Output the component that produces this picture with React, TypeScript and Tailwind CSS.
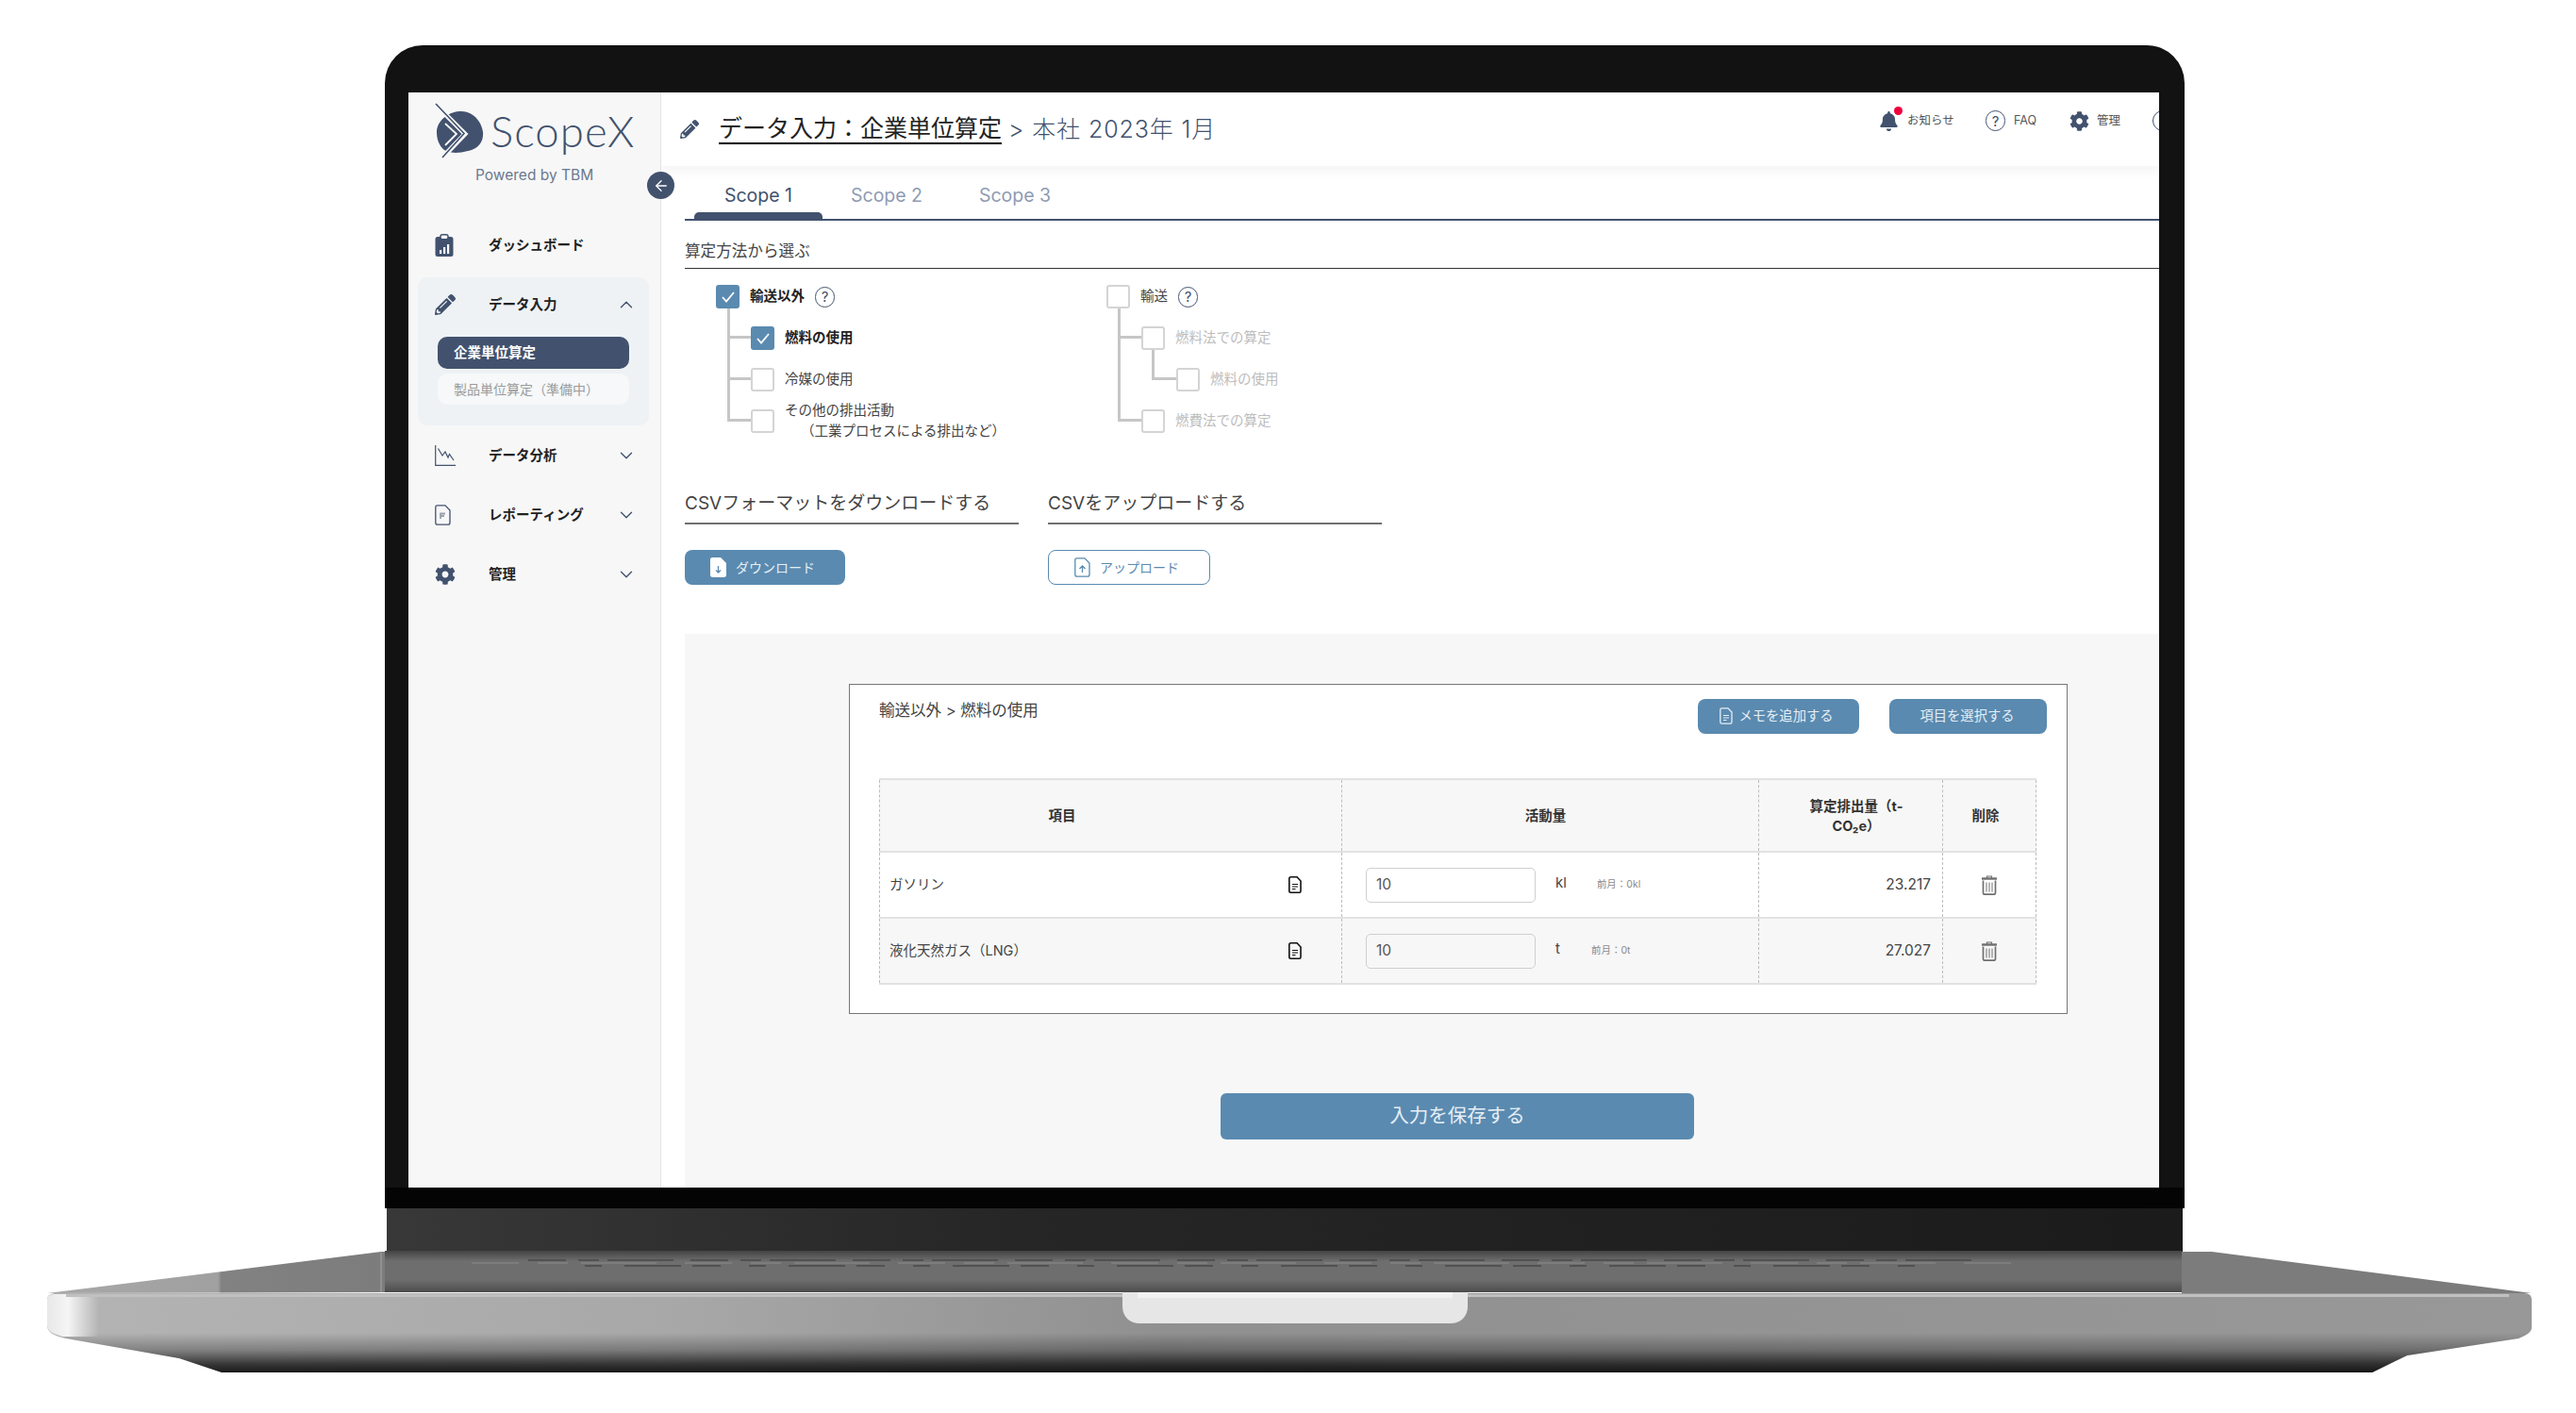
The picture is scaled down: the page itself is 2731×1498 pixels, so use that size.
import React from "react";
import { ArrowLeft, ChevronDown, ChevronUp } from "lucide-react";
import { FaBell, FaCog, FaPencilAlt } from "react-icons/fa";

const navy = "#42526e";

function Logo() {
  return (
    <svg width="56" height="60" viewBox="0 0 56 60" className="shrink-0">
      <path d="M3 31C3 20 14 10 27 9C39 8 50 17 52 31C53 41 47 49 36 51C25 54 13 54 8 47C5 43 3 38 3 31Z" fill={navy} />
      <path d="M1 1L33 33L10 57" fill="none" stroke="#f7f7f7" strokeWidth="5" />
      <path d="M2 1L32 32.500L9 58" fill="none" stroke={navy} strokeWidth="1.600" />
      <path d="M12 22L24 33L12 45" fill="none" stroke="#f7f7f7" strokeWidth="1.800" />
    </svg>
  );
}

function DashIcon() {
  return (
    <svg width="20" height="24" viewBox="0 0 20 24">
      <rect x="0.500" y="3" width="19" height="21" rx="2.500" fill={navy} />
      <rect x="6" y="0.800" width="8" height="5" rx="2" fill="#f7f7f7" stroke={navy} strokeWidth="1.500" />
      <rect x="5" y="17" width="2.200" height="4" fill="#fff" />
      <rect x="9" y="14" width="2.200" height="7" fill="#fff" />
      <rect x="13" y="11" width="2.200" height="10" fill="#fff" />
    </svg>
  );
}

function ChartIcon() {
  return (
    <svg width="22" height="22" viewBox="0 0 22 22" fill="none" stroke={navy} strokeWidth="1.200">
      <path d="M0.700 0V21.300H22" />
      <path d="M3.500 3.500L8 11L11 7L14 13L15.500 9.500L20 16" />
    </svg>
  );
}

function FileNavIcon() {
  return (
    <svg width="17" height="22" viewBox="0 0 17 22" fill="none">
      <path d="M2.500 0.800H11L16 6V19C16 20.300 15 21.200 14 21.200H3C1.800 21.200 0.800 20.300 0.800 19V2.500C0.800 1.500 1.500 0.800 2.500 0.800Z" stroke={navy} strokeWidth="1.300" />
      <path d="M6 15V9.500H11M6 12H10" stroke="#9aa0ab" strokeWidth="1.800" />
    </svg>
  );
}

function Doc({ color = "#111", bg = "none", width = 1.6 }: { color?: string; bg?: string; width?: number }) {
  return (
    <svg width="14" height="18" viewBox="0 0 14 18" fill={bg} stroke={color} strokeWidth={width}>
      <path d="M2.500 0.800H9L13 5V15.500C13 16.500 12.200 17.200 11.500 17.200H2.500C1.500 17.200 0.800 16.500 0.800 15.500V2.500C0.800 1.500 1.500 0.800 2.500 0.800Z" />
      <path d="M4 8.500H10M4 11H10M4 13.500H7.500" strokeWidth="1.100" />
    </svg>
  );
}

function Trash() {
  return (
    <svg width="18" height="21" viewBox="0 0 18 21" fill="none" stroke="#6f6f6f">
      <path d="M1 3.500H17" strokeWidth="2.400" />
      <path d="M6.500 3V1H11.500V3" strokeWidth="1.200" />
      <path d="M2.500 5.500V18.500C2.500 19.500 3.200 20.200 4 20.200H14C14.800 20.200 15.500 19.500 15.500 18.500V5.500" strokeWidth="1.700" />
      <path d="M6 7.500V17.500M9 7.500V17.500M12 7.500V17.500" strokeWidth="1" />
    </svg>
  );
}

function FileArrow({ up }: { up?: boolean }) {
  if (up) {
    return (
      <svg width="17" height="21" viewBox="0 0 17 21" fill="none" stroke="#5a8ab0" strokeWidth="1.300">
        <path d="M2.500 0.800H11L16 6V18C16 19.300 15.200 20.200 14 20.200H3C1.800 20.200 0.800 19.300 0.800 18V2.500C0.800 1.500 1.500 0.800 2.500 0.800Z" />
        <path d="M8.500 16V9M5.500 12L8.500 9L11.500 12" />
      </svg>
    );
  }
  return (
    <svg width="17" height="21" viewBox="0 0 17 21">
      <path d="M2 0H11L17 6V18.500C17 20 16 21 14.500 21H2.500C1 21 0 20 0 18.500V2C0 1 1 0 2 0Z" fill="#fff" />
      <path d="M8.500 9V16M6 13.500L8.500 16L11 13.500" fill="none" stroke="#5a8ab0" strokeWidth="1.300" />
    </svg>
  );
}

function Help() {
  return (
    <span className="flex h-[22px] w-[21px] shrink-0 items-center justify-center rounded-full border border-[#42526e] text-[15px] leading-none text-[#42526e]">?</span>
  );
}

function Box({ on, label, strong, dim, children }: { on?: boolean; label: React.ReactNode; strong?: boolean; dim?: boolean; children?: React.ReactNode }) {
  return (
    <div className="relative flex h-[25px] items-center gap-[11px]">
      <span className={`flex h-[25px] w-[25px] shrink-0 items-center justify-center rounded-[3px] border-2 ${on ? "border-[#5a8ab0] bg-[#5a8ab0]" : "border-[#d4d4d4] bg-white"}`}>
        {on && (
          <svg width="14" height="12" viewBox="0 0 14 12" fill="none" stroke="#fff" strokeWidth="1.800">
            <path d="M1 6L5 10.500L13 1" />
          </svg>
        )}
      </span>
      <span className={`mb-[2px] whitespace-nowrap text-[14.5px] leading-[22px] ${strong ? "font-bold text-[#222]" : dim ? "text-[#bdbdbd]" : "text-[#444]"}`}>{label}</span>
      {children}
    </div>
  );
}

function Line({ cls }: { cls: string }) {
  return <div className={`absolute bg-[#c6c6c6] ${cls}`} />;
}

function NavRow({ icon, label, open, tall, plain }: { icon: React.ReactNode; label: string; open?: boolean; tall?: boolean; plain?: boolean }) {
  return (
    <div className={`flex items-center pl-[18px] pr-[13px] ${tall ? "h-[56px]" : "h-[63px]"}`}>
      <span className="flex w-[57px] items-center">{icon}</span>
      <span className="flex-1 whitespace-nowrap text-[14.500px] font-bold text-[#222]">{label}</span>
      {plain ? null : open ? <ChevronUp size={22} color={navy} strokeWidth={1.500} /> : <ChevronDown size={22} color={navy} strokeWidth={1.500} />}
    </div>
  );
}

function Sidebar() {
  return (
    <aside className="relative flex w-[268px] shrink-0 flex-col border-r border-[#e3e3e3] bg-[#f7f7f7]">
      <div className="h-[130px] pl-[27px] pt-[11px]">
        <div className="flex items-center gap-[4px]">
          <Logo />
          <span className="font-['Lato',sans-serif] text-[45.500px] font-light leading-[60px] tracking-[1.100px] text-[#42526e]">ScopeX</span>
        </div>
        <div className="ml-[44px] mt-[7px] whitespace-nowrap text-[15.500px] leading-[20px] text-[#6a7991]">Powered by TBM</div>
      </div>
      <div className="pl-[10px] pr-[12px]">
        <NavRow plain icon={<DashIcon />} label="ダッシュボード" />
        <div className="mt-[3px] rounded-[10px] bg-[#eef2f5] pb-[22px]">
          <div className="pt-[1px]">
            <NavRow tall open icon={<FaPencilAlt size={22} color={navy} />} label="データ入力" />
          </div>
          <div className="mx-[21px] mt-[6px] flex h-[34px] items-center rounded-[10px] bg-[#42526e] pl-[17px] text-[14.500px] font-bold text-white">企業単位算定</div>
          <div className="mx-[21px] mt-[5px] flex h-[33px] items-center whitespace-nowrap rounded-[10px] bg-[#f6f8f9] pl-[17px] text-[14px] text-[#9a9a9a]">製品単位算定（準備中）</div>
        </div>
        <NavRow icon={<ChartIcon />} label="データ分析" />
        <NavRow icon={<FileNavIcon />} label="レポーティング" />
        <NavRow icon={<FaCog size={22} color={navy} />} label="管理" />
      </div>
      <button className="absolute right-[-15px] top-[84px] z-10 flex h-[29px] w-[29px] items-center justify-center rounded-full bg-[#42526e]">
        <ArrowLeft size={18} color="#fff" strokeWidth={1.700} />
      </button>
    </aside>
  );
}

function Header() {
  return (
    <header className="relative flex h-[78px] shrink-0 bg-white pl-[20px] shadow-[0_6px_10px_rgba(0,0,0,0.045)]">
      <div className="flex items-center">
        <FaPencilAlt size={20} color={navy} />
        <span className="ml-[21px] inline-block border-b-2 border-black text-[25px] leading-[30px] text-[#222]">データ入力：企業単位算定</span>
        <span className="ml-[7px] whitespace-pre text-[25px] font-light leading-[30px] tracking-[0.900px] text-[#42526e]">{"> 本社 2023年 1月"}</span>
      </div>
      <div className="ml-auto mr-[-15px] mt-[19px] flex h-[22px] shrink-0 items-center text-[12.500px] text-[#555]">
        <span className="relative">
          <FaBell size={21} color={navy} />
          <span className="absolute right-[-4px] top-[-5px] h-[9px] w-[9px] rounded-full bg-[#f0003c]" />
        </span>
        <span className="ml-[9px] w-[50px] whitespace-nowrap">お知らせ</span>
        <span className="ml-[33px]"><Help /></span>
        <span className="ml-[9px] w-[25px]">FAQ</span>
        <span className="ml-[34px]"><FaCog size={21} color={navy} /></span>
        <span className="ml-[8px] w-[25px] whitespace-nowrap">管理</span>
        <span className="ml-[34px] h-[22px] w-[22px] rounded-full border-[1.500px] border-[#42526e]" />
      </div>
    </header>
  );
}

function Tabs() {
  return (
    <div className="flex h-[58px] shrink-0 border-b-2 border-[#42526e] pl-[10px]">
      {["Scope 1", "Scope 2", "Scope 3"].map((t, i) => (
        <div key={t} className="flex h-[56px] w-[136px] flex-col items-center pt-[17px]">
          <span className={`text-[19.500px] font-normal leading-[28px] ${i === 0 ? "text-[#42526e]" : "text-[#8f9bb3]"}`}>{t}</span>
          {i === 0 && <span className="mt-[4px] h-[7px] w-full rounded-t-[5px] bg-[#42526e]" />}
        </div>
      ))}
    </div>
  );
}

function Tree() {
  return (
    <div className="flex pl-[33px] pt-[17px]">
      <div className="relative flex w-[414px] flex-col gap-[19px]">
        <Line cls="left-[12px] top-[24px] h-[121px] w-[3px]" />
        <Line cls="left-[12px] top-[54px] h-[3px] w-[26px]" />
        <Line cls="left-[12px] top-[98px] h-[3px] w-[26px]" />
        <Line cls="left-[12px] top-[142px] h-[3px] w-[26px]" />
        <Box on strong label="輸送以外"><Help /></Box>
        <div className="pl-[37px]"><Box on strong label="燃料の使用" /></div>
        <div className="pl-[37px]"><Box label="冷媒の使用" /></div>
        <div className="pl-[37px]">
          <Box label={<>その他の排出活動<br /><span className="ml-[17px]">（工業プロセスによる排出など）</span></>} />
        </div>
      </div>
      <div className="relative flex flex-col gap-[19px]">
        <Line cls="left-[12px] top-[24px] h-[121px] w-[3px]" />
        <Line cls="left-[12px] top-[54px] h-[3px] w-[26px]" />
        <Line cls="left-[12px] top-[142px] h-[3px] w-[26px]" />
        <Line cls="left-[48px] top-[68px] h-[33px] w-[3px]" />
        <Line cls="left-[48px] top-[98px] h-[3px] w-[26px]" />
        <Box label={<span className="text-[#444]">輸送</span>}><Help /></Box>
        <div className="pl-[37px]"><Box dim label="燃料法での算定" /></div>
        <div className="pl-[74px]"><Box dim label="燃料の使用" /></div>
        <div className="pl-[37px]"><Box dim label="燃費法での算定" /></div>
      </div>
    </div>
  );
}

function CsvCol({ title, children }: { title: string; children: React.ReactNode }) {
  return (
    <div className="w-[354px]">
      <div className="h-[38px] whitespace-nowrap border-b-2 border-[#707070] pt-[2px] text-[19px] leading-[28px] text-[#444]">{title}</div>
      <div className="mt-[27px]">{children}</div>
    </div>
  );
}

const cellBase = "flex items-center border-l border-dashed border-[#bdbdbd]";

function Row({ name, unit, prev, prevGap, value, shaded }: { name: string; unit: string; prev: string; prevGap: string; value: string; shaded?: boolean }) {
  return (
    <div className={`grid h-[70px] grid-cols-[490px_442px_195px_100px] border-t-2 border-[#e2e2e2] text-[14.500px] text-[#444] ${shaded ? "bg-[#f7f7f7]" : "bg-white"}`}>
      <div className={`${cellBase} justify-between pl-[10px] pr-[42px]`}>
        <span className="whitespace-nowrap">{name}</span>
        <Doc />
      </div>
      <div className={`${cellBase} pl-[25px]`}>
        <div className={`flex h-[37px] w-[180px] items-center rounded-[5px] border border-[#cfcfcf] pl-[10px] text-[15.500px] text-[#555] ${shaded ? "bg-[#f7f7f7]" : "bg-white"}`}>10</div>
        <span className="mb-[4px] ml-[21px] text-[15px]">{unit}</span>
        <span className={`whitespace-nowrap text-[10.500px] text-[#8a8a8a] ${prevGap}`}>{prev}</span>
      </div>
      <div className={`${cellBase} justify-end pr-[12px] text-[15.500px]`}>{value}</div>
      <div className={`${cellBase} justify-center border-r`}><Trash /></div>
    </div>
  );
}

function Card() {
  return (
    <div className="ml-[174px] h-[350px] w-[1292px] border-[1.500px] border-[#777] bg-white pl-[31px] pr-[32px] pt-[15px]">
      <div className="flex items-start justify-between">
        <span className="text-[16.500px] leading-[24px] text-[#444]">輸送以外 {">"} 燃料の使用</span>
        <div className="mr-[-11px] flex gap-[32px]">
          <button className="flex h-[37px] w-[171px] items-center justify-center gap-[6px] rounded-[8px] bg-[#5a8ab0] pb-[2px] pr-[4px] text-[14.300px] text-[#e6eef5]"><Doc color="#e6eef5" width={1.3} />メモを追加する</button>
          <button className="flex h-[37px] w-[167px] items-center justify-center rounded-[8px] bg-[#5a8ab0] pb-[2px] pr-[2px] text-[14.300px] text-[#e6eef5]">項目を選択する</button>
        </div>
      </div>
      <div className="mt-[47px] border-b-2 border-[#e2e2e2]">
        <div className="grid h-[77px] grid-cols-[490px_442px_195px_100px] border-t-2 border-[#e2e2e2] bg-[#f7f7f7] text-center text-[14.500px] font-bold leading-[21px] text-[#333]">
          <div className={`${cellBase} justify-center pr-[103px]`}>項目</div>
          <div className={`${cellBase} justify-center pr-[10px]`}>活動量</div>
          <div className={`${cellBase} justify-center pl-[36px] pr-[24px]`}>算定排出量（t-CO₂e）</div>
          <div className={`${cellBase} justify-center border-r pr-[8px]`}>削除</div>
        </div>
        <Row name="ガソリン" unit="kl" prev="前月：0kl" prevGap="ml-[32px]" value="23.217" />
        <Row shaded name="液化天然ガス（LNG）" unit="t" prev="前月：0t" prevGap="ml-[33px]" value="27.027" />
      </div>
    </div>
  );
}

function Base() {
  return (
    <svg width="2731" height="180" viewBox="0 1281 2731 180" className="block">
      <defs>
        <linearGradient id="hinge" x1="0" y1="0" x2="1" y2="0">
          <stop offset="0" stopColor="#383838" />
          <stop offset="0.35" stopColor="#262626" />
          <stop offset="1" stopColor="#1b1b1b" />
        </linearGradient>
        <linearGradient id="deckL" x1="0" y1="0" x2="1" y2="0">
          <stop offset="0" stopColor="#a8a8a8" />
          <stop offset="0.5" stopColor="#a0a0a0" />
          <stop offset="0.51" stopColor="#828282" />
          <stop offset="1" stopColor="#7c7c7c" />
        </linearGradient>
        <linearGradient id="deckC" x1="0" y1="0" x2="0" y2="1">
          <stop offset="0" stopColor="#444" />
          <stop offset="0.25" stopColor="#6e6e6e" />
          <stop offset="0.7" stopColor="#6e6e6e" />
          <stop offset="1" stopColor="#4c4c4c" />
        </linearGradient>
        <linearGradient id="baseH" x1="0" y1="0" x2="1" y2="0">
          <stop offset="0" stopColor="#b4b4b4" />
          <stop offset="0.25" stopColor="#a8a8a8" />
          <stop offset="0.45" stopColor="#909090" />
          <stop offset="1" stopColor="#989898" />
        </linearGradient>
        <linearGradient id="baseV" x1="0" y1="0" x2="0" y2="1">
          <stop offset="0" stopColor="#000" stopOpacity="0" />
          <stop offset="0.5" stopColor="#000" stopOpacity="0" />
          <stop offset="0.72" stopColor="#000" stopOpacity="0.28" />
          <stop offset="0.9" stopColor="#000" stopOpacity="0.7" />
          <stop offset="1" stopColor="#000" stopOpacity="0.85" />
        </linearGradient>
        <linearGradient id="tip" x1="0" y1="0" x2="1" y2="0">
          <stop offset="0" stopColor="#e8e8e8" />
          <stop offset="0.4" stopColor="#f5f5f5" />
          <stop offset="1" stopColor="#f5f5f5" stopOpacity="0" />
        </linearGradient>
      </defs>
      <rect x="410" y="1281" width="1904" height="47" fill="url(#hinge)" />
      <polygon points="50,1371 404,1327 412,1327 412,1370" fill="url(#deckL)" />
      <polygon points="2313,1327 2345,1327 2684,1371 2313,1371" fill="#7c7c7c" />
      <rect x="408" y="1326" width="1905" height="44" fill="url(#deckC)" />
      <path d="M404 1328V1370" stroke="#a4a4a4" strokeWidth="1" />
      <g fill="none" stroke="#333" strokeWidth="1.500" opacity="0.6">
        <path d="M560 1336H2100" strokeDasharray="40 13 22 9 70 18" />
        <path d="M620 1342H2050" strokeDasharray="18 24 60 12 30 30" />
      </g>
      <g fill="none" stroke="#a0a0a0" strokeWidth="1" opacity="0.6">
        <path d="M500 1339H2150" strokeDasharray="50 20 32 14 80 30" />
      </g>
      <path d="M50 1378C50 1373 54 1371 60 1371H2676C2682 1371 2684 1374 2684 1378V1408C2684 1412 2678 1416 2670 1419L2552 1437L2515 1455H235L190 1440L70 1419C56 1416 50 1412 50 1405Z" fill="url(#baseH)" />
      <path d="M50 1378C50 1373 54 1371 60 1371H2676C2682 1371 2684 1374 2684 1378V1408C2684 1412 2678 1416 2670 1419L2552 1437L2515 1455H235L190 1440L70 1419C56 1416 50 1412 50 1405Z" fill="url(#baseV)" />
      <path d="M50 1378C50 1373 54 1372 60 1372H105V1417H66C56 1414 50 1411 50 1405Z" fill="url(#tip)" />
      <rect x="70" y="1372" width="2590" height="3" fill="#c0c0c0" />
      <path d="M1190 1370H1556V1385C1556 1396 1548 1403 1538 1403H1208C1198 1403 1190 1396 1190 1385Z" fill="#e6e6e6" />
      <rect x="1206" y="1370" width="334" height="6" fill="#f2f2f2" />
    </svg>
  );
}

export default function App() {
  return (
    <div className="h-[1498px] w-[2731px] overflow-hidden bg-white pt-[48px] font-['Inter','Noto_Sans_CJK_JP',sans-serif]">
      <div className="ml-[408px] h-[1233px] w-[1908px] rounded-t-[40px] bg-[linear-gradient(#121212_98.200%,#040404_98.200%)] pb-[22px] pl-[25px] pr-[27px] pt-[50px]">
        <div className="flex h-[1161px] w-[1856px] bg-white">
          <Sidebar />
          <main className="flex min-w-0 flex-1 flex-col overflow-hidden">
            <Header />
            <div className="flex flex-1 flex-col pl-[25px]">
              <Tabs />
              <div className="h-[51px] shrink-0 border-b-[1.500px] border-[#333] pt-[20px] text-[16.600px] leading-[24px] text-[#444]">算定方法から選ぶ</div>
              <Tree />
              <div className="mt-[59px] flex gap-[31px]">
                <CsvCol title="CSVフォーマットをダウンロードする">
                  <button className="flex h-[37px] w-[170px] items-center gap-[10px] rounded-[8px] bg-[#5a8ab0] pl-[27px] text-[14px] text-[#e6eef5]"><FileArrow />ダウンロード</button>
                </CsvCol>
                <CsvCol title="CSVをアップロードする">
                  <button className="flex h-[37px] w-[172px] items-center gap-[10px] rounded-[8px] border border-[#5a8ab0] bg-white pl-[27px] text-[14px] text-[#5a8ab0]"><FileArrow up />アップロード</button>
                </CsvCol>
              </div>
              <div className="mt-[52px] flex-1 bg-[#f7f7f7] pt-[53px]">
                <Card />
                <button className="ml-[568px] mt-[84px] h-[49px] w-[502px] rounded-[6px] bg-[#5a8ab0] text-[20.500px] text-[#e6eef5]">入力を保存する</button>
              </div>
            </div>
          </main>
        </div>
      </div>
      <Base />
    </div>
  );
}
